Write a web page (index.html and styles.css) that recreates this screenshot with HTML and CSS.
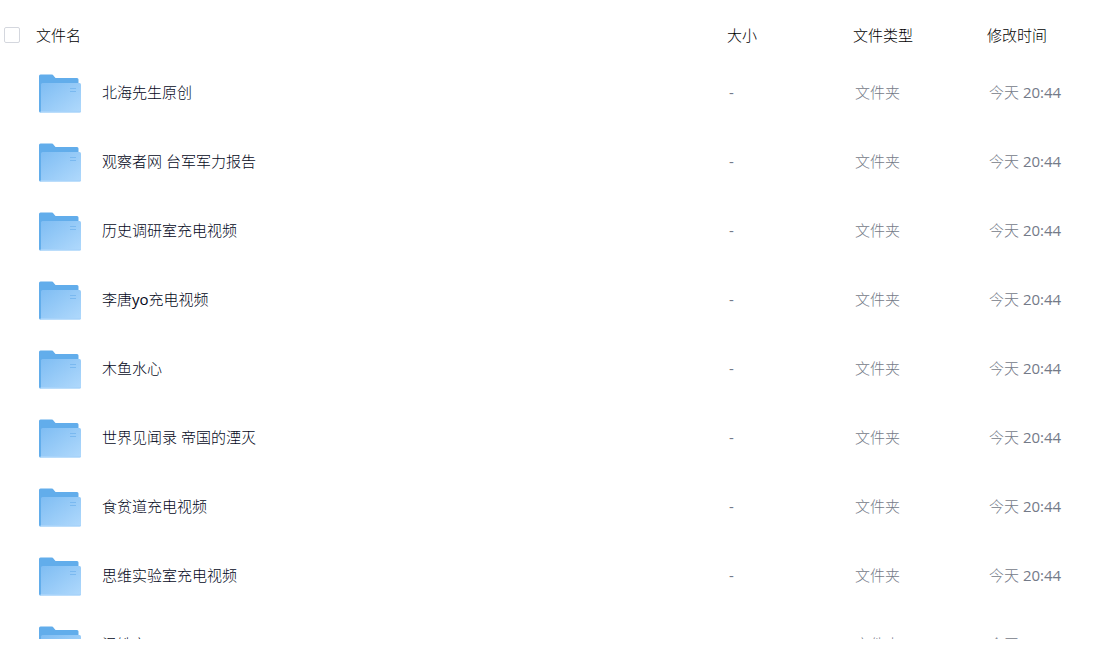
FILE: index.html
```html
<!DOCTYPE html>
<html lang="zh-CN">
	<head>
		<meta charset="utf-8">
		<title>文件列表</title>
		<link rel="stylesheet" href="styles.css">
	</head>

	<body>
		<!-- folder icon, used once in every row -->
		<svg class="defs" width="0" height="0" aria-hidden="true">
			<defs>
				<linearGradient id="front" x1="0" y1="0" x2="1" y2="1">
					<stop offset="0" stop-color="#7fbdf3"/>
					<stop offset="1" stop-color="#b0d9fc"/>
				</linearGradient>
				<symbol id="folder" viewBox="0 0 42 39">
					<path fill="#62adeb" d="M1.500 0.500H12.500Q14 0.500 14.800 1.900L16.500 4H38Q39.500 4 39.500 5.500V36H2V38.500H1.500Q0 38.500 0 37V2Q0 0.500 1.500 0.500Z"/>
					<path fill="url(#front)" d="M3.500 9H40.500Q42 9 42 10.500V37Q42 38.500 40.500 38.500H2V10.500Q2 9 3.500 9Z"/>
					<path fill="#a7d3fa" d="M2 37H42Q42 38.500 40.500 38.500H1Z"/>
					<path stroke="#7ab9f0" fill="none" d="M31 14.500H37M31 17.500H37"/>
				</symbol>
			</defs>
		</svg>

		<div class="file_list">
			<table>
				<colgroup>
					<col class="check">
					<col class="icon">
					<col class="name">
					<col class="size">
					<col class="type">
					<col class="time">
				</colgroup>
				<thead>
					<tr>
						<th><input type="checkbox" id="check_all" aria-label="全选"></th>
						<th colspan="2">文件名</th>
						<th>大小</th>
						<th>文件类型</th>
						<th>修改时间</th>
					</tr>
				</thead>
				<tbody>
					<tr>
						<td></td>
						<td class="icon"><svg class="folder"><use href="#folder"/></svg></td>
						<td class="title">北海先生原创</td>
						<td>-</td>
						<td>文件夹</td>
						<td>今天 20:44</td>
					</tr>
					<tr>
						<td></td>
						<td class="icon"><svg class="folder"><use href="#folder"/></svg></td>
						<td class="title">观察者网 台军军力报告</td>
						<td>-</td>
						<td>文件夹</td>
						<td>今天 20:44</td>
					</tr>
					<tr>
						<td></td>
						<td class="icon"><svg class="folder"><use href="#folder"/></svg></td>
						<td class="title">历史调研室充电视频</td>
						<td>-</td>
						<td>文件夹</td>
						<td>今天 20:44</td>
					</tr>
					<tr>
						<td></td>
						<td class="icon"><svg class="folder"><use href="#folder"/></svg></td>
						<td class="title">李唐yo充电视频</td>
						<td>-</td>
						<td>文件夹</td>
						<td>今天 20:44</td>
					</tr>
					<tr>
						<td></td>
						<td class="icon"><svg class="folder"><use href="#folder"/></svg></td>
						<td class="title">木鱼水心</td>
						<td>-</td>
						<td>文件夹</td>
						<td>今天 20:44</td>
					</tr>
					<tr>
						<td></td>
						<td class="icon"><svg class="folder"><use href="#folder"/></svg></td>
						<td class="title">世界见闻录 帝国的湮灭</td>
						<td>-</td>
						<td>文件夹</td>
						<td>今天 20:44</td>
					</tr>
					<tr>
						<td></td>
						<td class="icon"><svg class="folder"><use href="#folder"/></svg></td>
						<td class="title">食贫道充电视频</td>
						<td>-</td>
						<td>文件夹</td>
						<td>今天 20:44</td>
					</tr>
					<tr>
						<td></td>
						<td class="icon"><svg class="folder"><use href="#folder"/></svg></td>
						<td class="title">思维实验室充电视频</td>
						<td>-</td>
						<td>文件夹</td>
						<td>今天 20:44</td>
					</tr>
					<tr>
						<td></td>
						<td class="icon"><svg class="folder"><use href="#folder"/></svg></td>
						<td class="title">温铁文</td>
						<td>-</td>
						<td>文件夹</td>
						<td>今天 20:44</td>
					</tr>
				</tbody>
			</table>
		</div>
	</body>
</html>
```
FILE: styles.css
```css
body {margin:0;background:#fff;font-family:"Open Sans","Noto Sans CJK SC Light","Noto Sans CJK SC",sans-serif;font-size:15px;font-weight:400;line-height:20px}
svg.defs {position:absolute}
div.file_list {height:calc(100vh - 23px);overflow:hidden}
table {width:100%;table-layout:fixed;border-collapse:collapse}
col.check {width:36px}
col.icon {width:64px}
col.size {width:126px}
col.type {width:134px}
col.time {width:126px}
th, td {padding:0;text-align:left;vertical-align:middle;white-space:nowrap}
th {height:59px;padding-top:10px;box-sizing:border-box;color:#000;font-weight:400}
td {height:69px;padding:0 0 4px 2px;box-sizing:border-box;color:#747a88}
td.icon {padding:0 0 0 3px}
td.title {color:#03081a}
svg.folder {display:block;width:42px;height:39px}
input#check_all {appearance:none;display:block;width:16px;height:16px;margin:0 0 0 4px;border:1px solid #d4d7de;border-radius:2px;background:#fff}
```
